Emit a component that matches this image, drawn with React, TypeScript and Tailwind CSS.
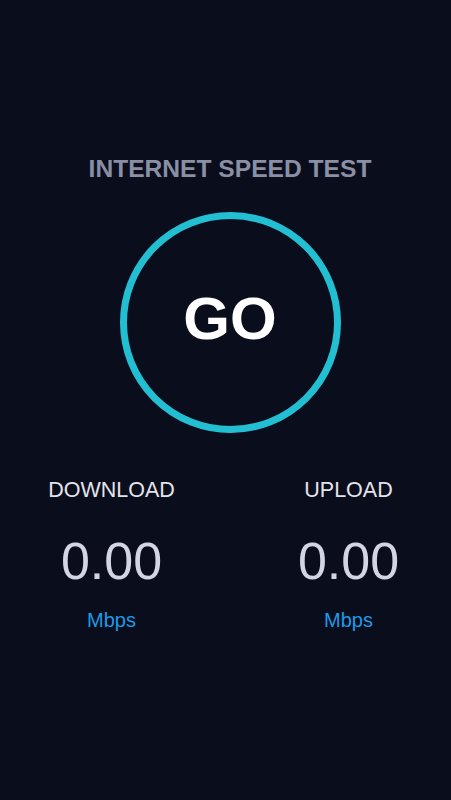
export default function App() {
  const stats = [
    { label: "DOWNLOAD", value: "0.00" },
    { label: "UPLOAD", value: "0.00" },
  ];

  return (
    <div className="min-h-screen w-full bg-[#0a0d1b] pl-[9px] font-['Liberation_Sans',Arial,sans-serif]">
      <div className="flex flex-col items-center pt-[153px]">
        {/* Title */}
        <h1 className="text-[24.6px] leading-8 font-bold text-[#8b8fa5]">
          INTERNET SPEED TEST
        </h1>

        {/* Start button */}
        <button className="mt-[27px] w-[221px] h-[221px] rounded-full border-[7px] border-[#22bfd3] flex items-center justify-center pb-[7px]">
          <span className="text-[60px] leading-none font-bold text-white">GO</span>
        </button>

        {/* Results */}
        <div className="mt-[43px] flex justify-center gap-[57px]">
          {stats.map((s) => (
            <div key={s.label} className="w-[180px] flex flex-col items-center">
              <span className="text-[21.5px] leading-7 text-[#e2e4ec]">{s.label}</span>
              <span className="mt-[31px] text-[52px] leading-[52px] text-[#d3d6e2]">
                {s.value}
              </span>
              <span className="mt-[19px] text-[20px] leading-7 text-[#1d9ae6]">Mbps</span>
            </div>
          ))}
        </div>
      </div>
    </div>
  );
}
